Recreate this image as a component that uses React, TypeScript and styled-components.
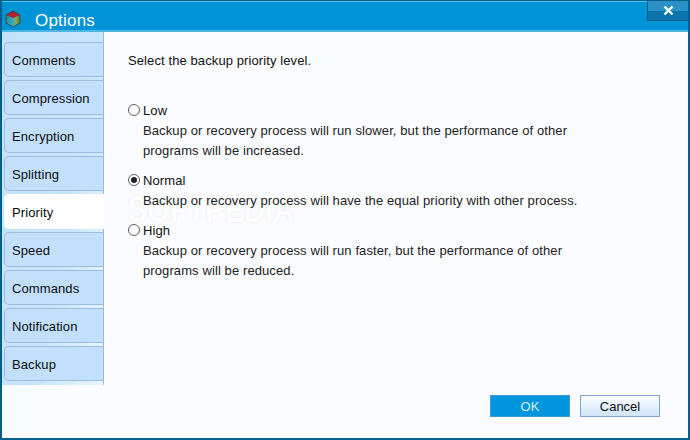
import React from 'react';
import styled, { createGlobalStyle } from 'styled-components';

const Global = createGlobalStyle`
  html, body { margin: 0; padding: 0; background: #005f8c; }
  body { font-family: "Liberation Sans", Arial, sans-serif; font-size: 13px; letter-spacing: 0.1px; color: #111; }
`;

const Win = styled.div`
  width: 690px;
  height: 440px;
  box-sizing: border-box;
  display: flex;
  flex-direction: column;
  background: #0093d6;
  border-left: 2px solid #005f8c;
  border-right: 2px solid #005f8c;
  border-bottom: 2px solid #005f8c;
  border-top: 1px solid #005f8c;
  overflow: hidden;
`;

const TitleBar = styled.div`
  height: 31px;
  box-sizing: border-box;
  display: flex;
  align-items: center;
  padding: 0 0 0 3px;
  background: #0093d6;
  border-top: 1px solid #5ec3ec;
  border-bottom: 2px solid #4db6e4;
  position: relative;
`;

const Title = styled.span`
  color: #fff;
  font-family: "Liberation Sans", Arial, sans-serif;
  font-size: 17px;
  margin-left: 14px;
  margin-top: 10px;
  letter-spacing: 0.2px;
`;

const IconWrap = styled.span`
  display: flex;
  margin-top: 6px;
`;

const CloseBtn = styled.button`
  position: absolute;
  top: -1px;
  right: 0;
  width: 41px;
  height: 20px;
  padding: 0;
  display: flex;
  align-items: center;
  justify-content: center;
  background: linear-gradient(#2a90c6 0%, #2a90c6 50%, #0a74ac 51%, #0a74ac 100%);
  border: 1px solid #005f8c;
  border-top: none;
  border-right: none;
`;

const Body = styled.div`
  flex: 1;
  display: flex;
  background: #fbfcff;
  position: relative;
`;

const Sidebar = styled.div`
  width: 102px;
  height: 353px;
  box-sizing: border-box;
  display: flex;
  flex-direction: column;
  gap: 3px;
  padding: 10px 0 0 2px;
  background: linear-gradient(100deg, #c2e2fb 0%, #c6e5fb 60%, #eaf6fe 100%);
  border-right: 1px solid #9bb8d8;
`;

const Tab = styled.div<{ $active?: boolean }>`
  height: 35px;
  box-sizing: border-box;
  display: flex;
  align-items: center;
  padding: 2px 0 0 7px;
  font-size: 13px;
  border-radius: 5px 0 0 5px;
  color: #0c0c10;
  background: ${(p) => (p.$active ? '#ffffff' : '#c2e0fc')};
  border: 1px solid ${(p) => (p.$active ? '#ffffff' : '#9fbcdc')};
  border-right: none;
  margin-right: ${(p) => (p.$active ? '-1px' : '0')};
  position: relative;
`;

const Main = styled.div`
  flex: 1;
  display: flex;
  flex-direction: column;
  padding: 19px 28px 21px 24px;
  position: relative;
  z-index: 1;
`;

const Intro = styled.div`
  line-height: 20px;
  margin-bottom: 29px;
`;

const Option = styled.div<{ $gap: number }>`
  margin-bottom: ${(p) => p.$gap}px;
`;

const OptionHead = styled.div`
  display: flex;
  align-items: center;
  height: 20px;
  gap: 2px;
`;

const Radio = styled.span<{ $on?: boolean }>`
  width: 10px;
  height: 10px;
  border-radius: 50%;
  border: 1px solid #5a6068;
  background: #fff;
  display: inline-flex;
  align-items: center;
  justify-content: center;
  margin-right: 1px;
  &::after {
    content: '';
    width: 6px;
    height: 6px;
    border-radius: 50%;
    background: ${(p) => (p.$on ? '#222' : 'transparent')};
  }
`;

const Desc = styled.div`
  padding: 1px 0 0 15px;
  line-height: 20px;
  width: 440px;
  color: #222;
`;

const Footer = styled.div`
  margin-top: auto;
  display: flex;
  justify-content: flex-end;
  gap: 10px;
`;

const Btn = styled.button<{ $primary?: boolean }>`
  width: 80px;
  height: 22px;
  padding: 0;
  font-family: "Liberation Sans", Arial, sans-serif;
  font-size: 13px;
  color: ${(p) => (p.$primary ? '#d8f0fc' : '#111')};
  background: ${(p) => (p.$primary ? '#0096de' : 'linear-gradient(#fbfdff, #cfe4fa)')};
  border: 1px solid ${(p) => (p.$primary ? '#3a9cd8' : '#7ea6cc')};
`;

const Watermark = styled.div`
  position: absolute;
  left: 126px;
  top: 156px;
  font-family: "Liberation Sans", Arial, sans-serif;
  font-size: 29px;
  font-weight: 700;
  line-height: 34px;
  letter-spacing: 0;
  color: #ffffff;
  text-shadow: 0 0 2px #dde1e7;
  transform: scaleY(1.25);
  transform-origin: left top;
  pointer-events: none;
`;

const tabs = ['Comments', 'Compression', 'Encryption', 'Splitting', 'Priority', 'Speed', 'Commands', 'Notification', 'Backup'];

const AppIcon = () => (
  <svg width="16" height="18" viewBox="0 0 16 18">
    <defs>
      <linearGradient id="front" x1="0" x2="1" y1="0" y2="0">
        <stop offset="0" stopColor="#2f8f6a" />
        <stop offset="0.45" stopColor="#35a6dc" />
        <stop offset="0.7" stopColor="#7fae4a" />
        <stop offset="1" stopColor="#5d7a36" />
      </linearGradient>
    </defs>
    <path d="M1 5 L8 8 L15 5 L15 13 L8 17 L1 13 Z" fill="url(#front)" />
    <path d="M8 1 L15 5 L8 8 L1 5 Z" fill="#b8202a" />
    <path d="M8 1 L15 5 L15 13 L8 17 L1 13 L1 5 Z" fill="none" stroke="#2a3c46" strokeWidth="0.8" />
  </svg>
);

export default function App() {
  return (
    <>
      <Global />
      <Win>
        <TitleBar>
          <IconWrap><AppIcon /></IconWrap>
          <Title>Options</Title>
          <CloseBtn>
            <svg width="11" height="11" viewBox="0 0 11 11">
              <path d="M1.5 1.5 L9.5 9.5 M9.5 1.5 L1.5 9.5" stroke="#fff" strokeWidth="2.4" />
            </svg>
          </CloseBtn>
        </TitleBar>
        <Body>
          <Sidebar>
            {tabs.map((t) => (
              <Tab key={t} $active={t === 'Priority'}>{t}</Tab>
            ))}
          </Sidebar>
          <Watermark>SOFTPEDIA</Watermark>
          <Main>
            <Intro>Select the backup priority level.</Intro>
            <Option $gap={9}>
              <OptionHead><Radio />Low</OptionHead>
              <Desc>
                Backup or recovery process will run slower, but the performance of other
                programs will be increased.
              </Desc>
            </Option>
            <Option $gap={9}>
              <OptionHead><Radio $on />Normal</OptionHead>
              <Desc>Backup or recovery process will have the equal priority with other process.</Desc>
            </Option>
            <Option $gap={0}>
              <OptionHead><Radio />High</OptionHead>
              <Desc>
                Backup or recovery process will run faster, but the performance of other
                programs will be reduced.
              </Desc>
            </Option>
            <Footer>
              <Btn $primary>OK</Btn>
              <Btn>Cancel</Btn>
            </Footer>
          </Main>
        </Body>
      </Win>
    </>
  );
}
